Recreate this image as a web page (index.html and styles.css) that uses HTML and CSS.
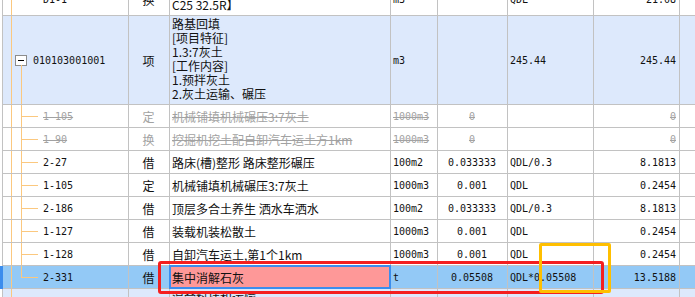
FILE: index.html
```html
<!DOCTYPE html>
<html>
<head>
<meta charset="utf-8">
<link rel="stylesheet" href="styles.css">
</head>
<body>
<div class="grid">
  <div class="row r0">
    <div class="c tree n">D1-1</div>
    <div class="c ctr">换</div>
    <div class="c desc top0">【商品混凝土<br>C25 32.5R】</div>
    <div class="c n">m3</div>
    <div class="c n ctr"></div>
    <div class="c n">QDL</div>
    <div class="c n rt">21.08</div>
    <div class="c"></div>
  </div>

  <div class="row r1 item">
    <div class="c tree open n"><span class="tg"></span>010103001001</div>
    <div class="c ctr">项</div>
    <div class="c desc">路基回填<br>[项目特征]<br>1.3:7灰土<br>[工作内容]<br>1.预拌灰土<br>2.灰土运输、碾压</div>
    <div class="c n">m3</div>
    <div class="c n ctr"></div>
    <div class="c n">245.44</div>
    <div class="c n rt">245.44</div>
    <div class="c"></div>
  </div>

  <div class="row off">
    <div class="c tree kid n"><s>1-105</s></div>
    <div class="c ctr">定</div>
    <div class="c"><s>机械铺填机械碾压3:7灰土</s></div>
    <div class="c n"><s>1000m3</s></div>
    <div class="c n ctr"><s>0</s></div>
    <div class="c n"></div>
    <div class="c n rt"><s>0</s></div>
    <div class="c"></div>
  </div>

  <div class="row off">
    <div class="c tree kid n"><s>1-90</s></div>
    <div class="c ctr">换</div>
    <div class="c"><s>挖掘机挖土配自卸汽车运土方1km</s></div>
    <div class="c n"><s>1000m3</s></div>
    <div class="c n ctr"><s>0</s></div>
    <div class="c n"></div>
    <div class="c n rt"><s>0</s></div>
    <div class="c"></div>
  </div>

  <div class="row">
    <div class="c tree kid n">2-27</div>
    <div class="c ctr">借</div>
    <div class="c">路床(槽)整形 路床整形碾压</div>
    <div class="c n">100m2</div>
    <div class="c n ctr">0.033333</div>
    <div class="c n">QDL/0.3</div>
    <div class="c n rt">8.1813</div>
    <div class="c"></div>
  </div>

  <div class="row">
    <div class="c tree kid n">1-105</div>
    <div class="c ctr">定</div>
    <div class="c">机械铺填机械碾压3:7灰土</div>
    <div class="c n">1000m3</div>
    <div class="c n ctr">0.001</div>
    <div class="c n">QDL</div>
    <div class="c n rt">0.2454</div>
    <div class="c"></div>
  </div>

  <div class="row">
    <div class="c tree kid n">2-186</div>
    <div class="c ctr">借</div>
    <div class="c">顶层多合土养生 洒水车洒水</div>
    <div class="c n">100m2</div>
    <div class="c n ctr">0.033333</div>
    <div class="c n">QDL/0.3</div>
    <div class="c n rt">8.1813</div>
    <div class="c"></div>
  </div>

  <div class="row">
    <div class="c tree kid n">1-127</div>
    <div class="c ctr">借</div>
    <div class="c">装载机装松散土</div>
    <div class="c n">1000m3</div>
    <div class="c n ctr">0.001</div>
    <div class="c n">QDL</div>
    <div class="c n rt">0.2454</div>
    <div class="c"></div>
  </div>

  <div class="row">
    <div class="c tree kid n">1-128</div>
    <div class="c ctr">借</div>
    <div class="c">自卸汽车运土,第1个1km</div>
    <div class="c n">1000m3</div>
    <div class="c n ctr">0.001</div>
    <div class="c n">QDL</div>
    <div class="c n rt">0.2454</div>
    <div class="c"></div>
  </div>

  <div class="row sel">
    <div class="c tree kid last n">2-331</div>
    <div class="c ctr">借</div>
    <div class="c editing"><div class="edit">集中消解石灰</div></div>
    <div class="c n">t</div>
    <div class="c n ctr">0.05508</div>
    <div class="c n">QDL*0.05508</div>
    <div class="c n rt">13.5188</div>
    <div class="c"></div>
  </div>

  <div class="row r10 item">
    <div class="c tree n"></div>
    <div class="c ctr"></div>
    <div class="c desc">混合料拌和运输</div>
    <div class="c n"></div>
    <div class="c n"></div>
    <div class="c n"></div>
    <div class="c n"></div>
    <div class="c"></div>
  </div>
</div>

<div class="mark red"></div>
<div class="mark amber"></div>
</body>
</html>
```

FILE: styles.css
```css
body {
  margin: 0;
  background: #fff;
  overflow: hidden;
  font: 12px "Noto Sans CJK SC", sans-serif;
  color: #111;
}

.grid {
  margin-top: -16px;
  padding-left: 2px;
}

.row {
  display: grid;
  grid-template-columns: 126px 41px 221px 47px 70px 86px 86px 1fr;
  height: 23px;
  border-left: 1px solid #c2c2c2;
}
.r0 { height: 32px; }
.r1 { height: 89px; }
.r10 { height: 30px; }

.c {
  box-sizing: border-box;
  border-right: 1px solid #c2c2c2;
  border-bottom: 1px solid #c2c2c2;
  display: flex;
  align-items: center;
  padding: 0 3px 0 2px;
  white-space: nowrap;
  overflow: hidden;
  position: relative;
}
.c:last-child { border-right: 0; }

.n { font: 10px "DejaVu Sans Mono", monospace; }
.ctr { justify-content: center; }
.rt { justify-content: flex-end; }

.desc {
  display: block;
  white-space: normal;
  line-height: 14px;
  padding-top: 1px;
}
.top0 { padding-top: 0; }

.item .c { background-color: #dde9fc; }
.sel .c { background-color: #93c9f6; }
.sel {
  border-left-color: #3b8ded;
  box-shadow: -2px 0 0 #3b8ded;
}

.off { color: #a2a2a2; }
s { text-decoration: line-through; }

/* tree lines */
.tree {
  padding-left: 40px;
  background-image: linear-gradient(#fbc87f, #fbc87f);
  background-position: 8px 0;
  background-size: 1px 100%;
  background-repeat: no-repeat;
}
.open { padding-left: 12px; }
.open::after {
  content: "";
  position: absolute;
  left: 18px;
  top: 49px;
  bottom: 0;
  width: 1px;
  background: #fbc87f;
}
.kid::before {
  content: "";
  position: absolute;
  left: 18px;
  top: 0;
  bottom: 0;
  width: 1px;
  background: #fbc87f;
}
.kid::after {
  content: "";
  position: absolute;
  left: 18px;
  top: 11px;
  width: 17px;
  height: 1px;
  background: #fbc87f;
}
.last::before {
  bottom: auto;
  height: 11px;
}

.tg {
  flex: none;
  position: relative;
  box-sizing: border-box;
  width: 12px;
  height: 11px;
  margin-right: 6px;
  border: 1px solid #8c8c8c;
  background: #fff;
}
.tg::before {
  content: "";
  position: absolute;
  left: 2px;
  right: 2px;
  top: 4px;
  height: 1px;
  background: #000;
}

/* cell in edit mode */
.editing { overflow: visible; }
.edit {
  position: absolute;
  z-index: 1;
  inset: -1px;
  box-sizing: border-box;
  border: 2px solid #3b8ded;
  background: #fe9898;
  padding-left: 1px;
  display: flex;
  align-items: center;
}

/* annotation boxes */
.mark {
  position: absolute;
  box-sizing: border-box;
  z-index: 2;
}
.red {
  left: 158px;
  top: 261px;
  width: 446px;
  height: 33px;
  border: 3px solid #f41f1f;
  border-radius: 3px;
}
.amber {
  left: 539px;
  top: 243px;
  width: 72px;
  height: 50px;
  border: 3px solid #ffbf00;
  border-radius: 2px;
}
```
